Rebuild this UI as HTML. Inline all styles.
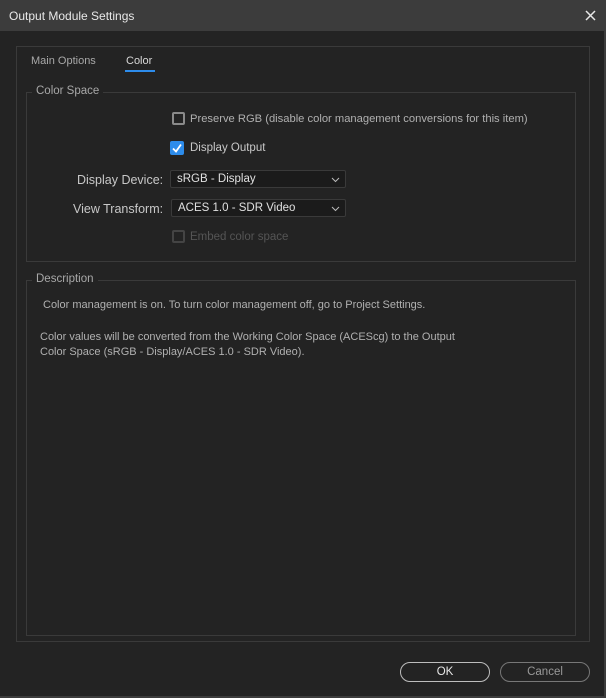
<!DOCTYPE html>
<html><head><style>
*{box-sizing:border-box;margin:0;padding:0}
body{width:606px;height:698px;background:#232323;font-family:"Liberation Sans",sans-serif;color:#b8b8b8;position:relative;overflow:hidden;font-size:11.5px}
.abs{position:absolute;white-space:nowrap}
.title{position:absolute;left:0;top:0;width:606px;height:31px;background:#3c3c3c}
.box{position:absolute;border:1px solid #3a3a3a}
.leg{position:absolute;background:#232323;padding:0 4px;color:#a8a8a8;font-size:11.5px}
.cb{position:absolute;width:13px;height:13px;border:2px solid #8a8a8a;border-radius:2px}
.sel{position:absolute;height:18px;background:#1b1b1b;border:1px solid #3a3a3a;border-radius:2px;color:#e0e0e0;padding-left:6px;line-height:17px;font-size:11.5px}
.btn{position:absolute;height:20px;border:1px solid #bdbdbd;border-radius:10px;text-align:center;line-height:19px;font-size:11.5px}
</style></head><body>
<div class="title"></div>
<div class="abs" style="left:9px;top:9px;color:#e8e8e8;font-size:12px">Output Module Settings</div>
<svg class="abs" style="left:585px;top:10px" width="11" height="11"><path d="M1 1L10 10M10 1L1 10" stroke="#e8e8e8" stroke-width="1.5"/></svg>
<div class="abs" style="left:604px;top:31px;width:2px;height:667px;background:#3c3c3c"></div>
<div class="abs" style="left:0;top:696px;width:606px;height:2px;background:#3c3c3c"></div>
<div class="box" style="left:16px;top:46px;width:574px;height:596px"></div>
<div class="abs" style="left:31px;top:55px;color:#a8a8a8;font-size:11px">Main Options</div>
<div class="abs" style="left:126px;top:55px;color:#d8d8d8;font-size:11px">Color</div>
<div class="abs" style="left:125px;top:70px;width:30px;height:2px;background:#2d8ceb"></div>
<div class="box" style="left:26px;top:92px;width:550px;height:170px"></div>
<div class="leg" style="left:32px;top:85px">Color Space</div>
<div class="cb" style="left:172px;top:112px"></div>
<div class="abs" style="left:190px;top:113px;color:#b0b0b0;font-size:11.2px">Preserve RGB (disable color management conversions for this item)</div>
<div class="abs" style="left:170px;top:141px;width:14px;height:14px;background:#2d8ceb;border-radius:2px"></div>
<svg class="abs" style="left:170px;top:141px" width="14" height="14"><path d="M3 7.5L6 10.5L11 3.5" stroke="#fff" stroke-width="1.8" fill="none"/></svg>
<div class="abs" style="left:190px;top:142px;color:#c8c8c8">Display Output</div>
<div class="abs" style="left:77px;top:173px;color:#c8c8c8;font-size:12.5px">Display Device:</div>
<div class="sel" style="left:170px;top:170px;width:176px">sRGB - Display</div>
<div class="abs" style="left:73px;top:202px;color:#c8c8c8;font-size:12.5px">View Transform:</div>
<div class="sel" style="left:171px;top:199px;width:175px">ACES 1.0 - SDR Video</div>
<svg class="abs" style="left:331px;top:177px" width="9" height="6"><path d="M1 1L4.5 4.5L8 1" stroke="#bbb" fill="none"/></svg>
<svg class="abs" style="left:331px;top:206px" width="9" height="6"><path d="M1 1L4.5 4.5L8 1" stroke="#bbb" fill="none"/></svg>
<div class="cb" style="left:172px;top:230px;border-color:#444"></div>
<div class="abs" style="left:190px;top:231px;color:#555">Embed color space</div>
<div class="box" style="left:26px;top:280px;width:550px;height:356px"></div>
<div class="leg" style="left:32px;top:273px">Description</div>
<div class="abs" style="left:43px;top:299px;color:#b0b0b0;font-size:11px">Color management is on. To turn color management off, go to Project Settings.</div>
<div class="abs" style="left:40px;top:330px;color:#b0b0b0;font-size:11px;line-height:15px">Color values will be converted from the Working Color Space (ACEScg) to the Output<br>Color Space (sRGB - Display/ACES 1.0 - SDR Video).</div>
<div class="btn" style="left:400px;top:662px;width:90px;color:#e8e8e8">OK</div>
<div class="btn" style="left:500px;top:662px;width:90px;border-color:#777;color:#999">Cancel</div>
</body></html>
